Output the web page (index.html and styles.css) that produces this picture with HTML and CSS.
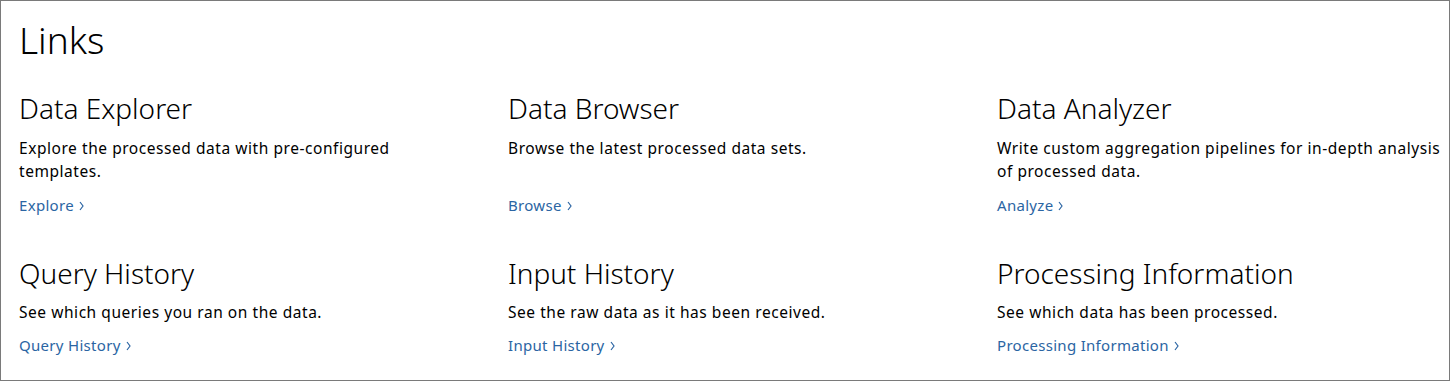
FILE: index.html
```html
<!DOCTYPE html>
<html lang="en">
<head>
    <meta charset="UTF-8">
    <meta name="viewport" content="width=device-width, initial-scale=1.0">
    <title>Links</title>
    <link rel="stylesheet" href="styles.css">
</head>
<body>
    <div class="page">
        <h1>Links</h1>

        <div class="link-grid">
            <!-- Row 1 -->
            <div class="link-card">
                <h2>Data Explorer</h2>
                <p>Explore the processed data with pre-configured templates.</p>
                <a href="#" class="more">Explore <svg class="chevron" width="5" height="10" viewBox="0 0 5 10"><polyline points="1 1 4 5 1 9"></polyline></svg></a>
            </div>
            <div class="link-card">
                <h2>Data Browser</h2>
                <p>Browse the latest processed data sets.</p>
                <a href="#" class="more">Browse <svg class="chevron" width="5" height="10" viewBox="0 0 5 10"><polyline points="1 1 4 5 1 9"></polyline></svg></a>
            </div>
            <div class="link-card">
                <h2>Data Analyzer</h2>
                <p>Write custom aggregation pipelines for in-depth analysis of processed data.</p>
                <a href="#" class="more">Analyze <svg class="chevron" width="5" height="10" viewBox="0 0 5 10"><polyline points="1 1 4 5 1 9"></polyline></svg></a>
            </div>

            <!-- Row 2 -->
            <div class="link-card short">
                <h2>Query History</h2>
                <p>See which queries you ran on the data.</p>
                <a href="#" class="more">Query History <svg class="chevron" width="5" height="10" viewBox="0 0 5 10"><polyline points="1 1 4 5 1 9"></polyline></svg></a>
            </div>
            <div class="link-card short">
                <h2>Input History</h2>
                <p>See the raw data as it has been received.</p>
                <a href="#" class="more">Input History <svg class="chevron" width="5" height="10" viewBox="0 0 5 10"><polyline points="1 1 4 5 1 9"></polyline></svg></a>
            </div>
            <div class="link-card short">
                <h2>Processing Information</h2>
                <p>See which data has been processed.</p>
                <a href="#" class="more">Processing Information <svg class="chevron" width="5" height="10" viewBox="0 0 5 10"><polyline points="1 1 4 5 1 9"></polyline></svg></a>
            </div>
        </div>
    </div>
</body>
</html>
```

FILE: styles.css
```css
body {
    margin: 0;
    font-family: "Noto Sans", "Open Sans", sans-serif;
    color: #000;
    background-color: #fff;
}

.page {
    box-sizing: border-box;
    width: 1450px;
    height: 381px;
    border: 1px solid #7a7a7a;
    padding: 14px 18px 0 18px;
    overflow: hidden;
}

h1 {
    margin: 0 0 25px 0;
    font-size: 37px;
    font-weight: 300;
    line-height: 50px;
}

.link-grid {
    display: grid;
    grid-template-columns: repeat(3, 445px);
    column-gap: 44px;
    row-gap: 39px;
}

.link-card h2 {
    margin: 0 0 11px 0;
    font-size: 28px;
    font-weight: 300;
    line-height: 36px;
}

.link-card p {
    margin: 0 0 11px 0;
    font-size: 15.5px;
    line-height: 23px;
    letter-spacing: 0.55px;
    min-height: 46px;
}

.link-card.short h2 {
    margin-bottom: 10px;
}

.link-card.short p {
    min-height: 23px;
    margin-bottom: 10px;
}

.more {
    display: inline-flex;
    align-items: center;
    gap: 5px;
    font-size: 15px;
    line-height: 20px;
    letter-spacing: 0.3px;
    color: #2b65a3;
    text-decoration: none;
}

.chevron {
    fill: none;
    stroke: currentColor;
    stroke-width: 1.2;
    margin-top: 2px;
}
```
